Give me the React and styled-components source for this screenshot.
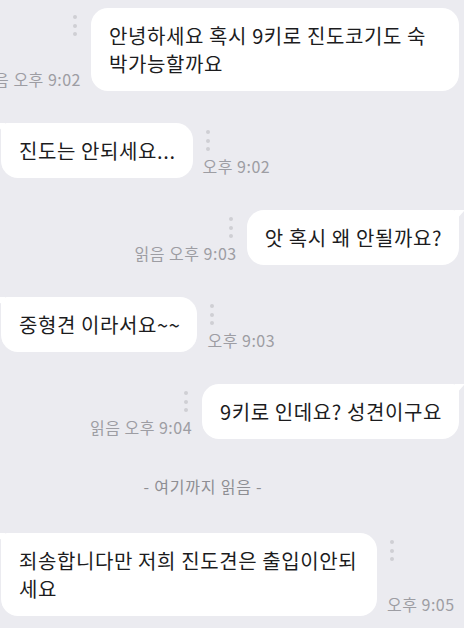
import React from "react";
import styled, { createGlobalStyle } from "styled-components";

const Global = createGlobalStyle`
  html, body { margin: 0; padding: 0; background: #ebebf0; overflow: hidden; }
  body { font-family: "Noto Sans CJK KR", "Noto Sans", sans-serif; }
`;

const Screen = styled.div`
  width: 464px;
  height: 628px;
  overflow: hidden;
  background: #ebebf0;
  display: flex;
  flex-direction: column;
  gap: 32px;
  padding-top: 8px;
  box-sizing: border-box;
`;

const Row = styled.div`
  display: flex;
  justify-content: ${(p) => (p.$mine ? "flex-end" : "flex-start")};
  align-items: stretch;
  gap: 10px;
  padding: ${(p) => (p.$mine ? "0 5px 0 0" : "0 0 0 1px")};
`;

const Bubble = styled.div`
  position: relative;
  flex-shrink: 0;
  box-sizing: border-box;
  width: ${(p) => (p.$width ? `${p.$width}px` : "auto")};
  background: #ffffff;
  border-radius: 17px;
  ${(p) => p.$tail && (p.$mine ? "border-top-right-radius: 6px;" : "border-top-left-radius: 6px;")}
  padding: 14px 17px 13px 18px;
  font-size: 20px;
  letter-spacing: 0.6px;
  line-height: 28px;
  color: #1c1c1e;
  white-space: nowrap;

  &::after {
    content: "";
    display: ${(p) => (p.$tail ? "block" : "none")};
    position: absolute;
    top: 0;
    ${(p) => (p.$mine ? "right: -6px;" : "left: -6px;")}
    width: 10px;
    height: 11px;
    background: #ffffff;
    clip-path: ${(p) =>
      p.$mine
        ? "polygon(0 0, 100% 0, 30% 70%, 0 100%)"
        : "polygon(0 0, 100% 0, 100% 100%, 70% 70%)"};
  }
`;

const Meta = styled.div`
  flex-shrink: 0;
  display: flex;
  flex-direction: column;
  justify-content: space-between;
  align-items: ${(p) => (p.$mine ? "flex-end" : "flex-start")};
  padding: 7px 0 3px;
`;

const Dots = styled.div`
  display: flex;
  flex-direction: column;
  gap: 4.5px;
  margin: ${(p) => (p.$mine ? "0 4px 0 0" : "0 0 0 3px")};
`;

const Dot = styled.span`
  width: 4px;
  height: 4px;
  border-radius: 50%;
  background: #cfcfd4;
`;

const Time = styled.span`
  font-size: 16px;
  letter-spacing: 0.5px;
  line-height: 18px;
  color: #9d9da3;
  white-space: nowrap;
`;

const Divider = styled.div`
  height: 30px;
  line-height: 30px;
  padding-right: 58px;
  text-align: center;
  font-size: 16px;
  letter-spacing: 0.8px;
  color: #8e8e93;
`;

const messages = [
  { mine: true, lines: ["안녕하세요 혹시 9키로 진도코기도 숙", "박가능할까요"], time: "읽음 오후 9:02", width: 368 },
  { mine: false, tail: true, lines: ["진도는 안되세요..."], time: "오후 9:02" },
  { mine: true, tail: true, lines: ["앗 혹시 왜 안될까요?"], time: "읽음 오후 9:03" },
  { mine: false, tail: true, lines: ["중형견 이라서요~~"], time: "오후 9:03" },
  { mine: true, tail: true, lines: ["9키로 인데요? 성견이구요"], time: "읽음 오후 9:04" },
  { divider: "- 여기까지 읽음 -" },
  { mine: false, tail: true, lines: ["죄송합니다만 저희 진도견은 출입이안되", "세요"], time: "오후 9:05", width: 376 },
];

function MetaInfo({ mine, time }) {
  return (
    <Meta $mine={mine}>
      <Dots $mine={mine}>
        <Dot />
        <Dot />
        <Dot />
      </Dots>
      <Time>{time}</Time>
    </Meta>
  );
}

function Message({ m }) {
  const bubble = (
    <Bubble $mine={m.mine} $tail={m.tail} $width={m.width}>
      {m.lines.map((l, i) => (
        <React.Fragment key={i}>
          {i > 0 && <br />}
          {l}
        </React.Fragment>
      ))}
    </Bubble>
  );
  return (
    <Row $mine={m.mine}>
      {m.mine ? (
        <>
          <MetaInfo mine time={m.time} />
          {bubble}
        </>
      ) : (
        <>
          {bubble}
          <MetaInfo time={m.time} />
        </>
      )}
    </Row>
  );
}

export default function App() {
  return (
    <>
      <Global />
      <Screen>
        {messages.map((m, i) =>
          m.divider ? <Divider key={i}>{m.divider}</Divider> : <Message key={i} m={m} />
        )}
      </Screen>
    </>
  );
}
